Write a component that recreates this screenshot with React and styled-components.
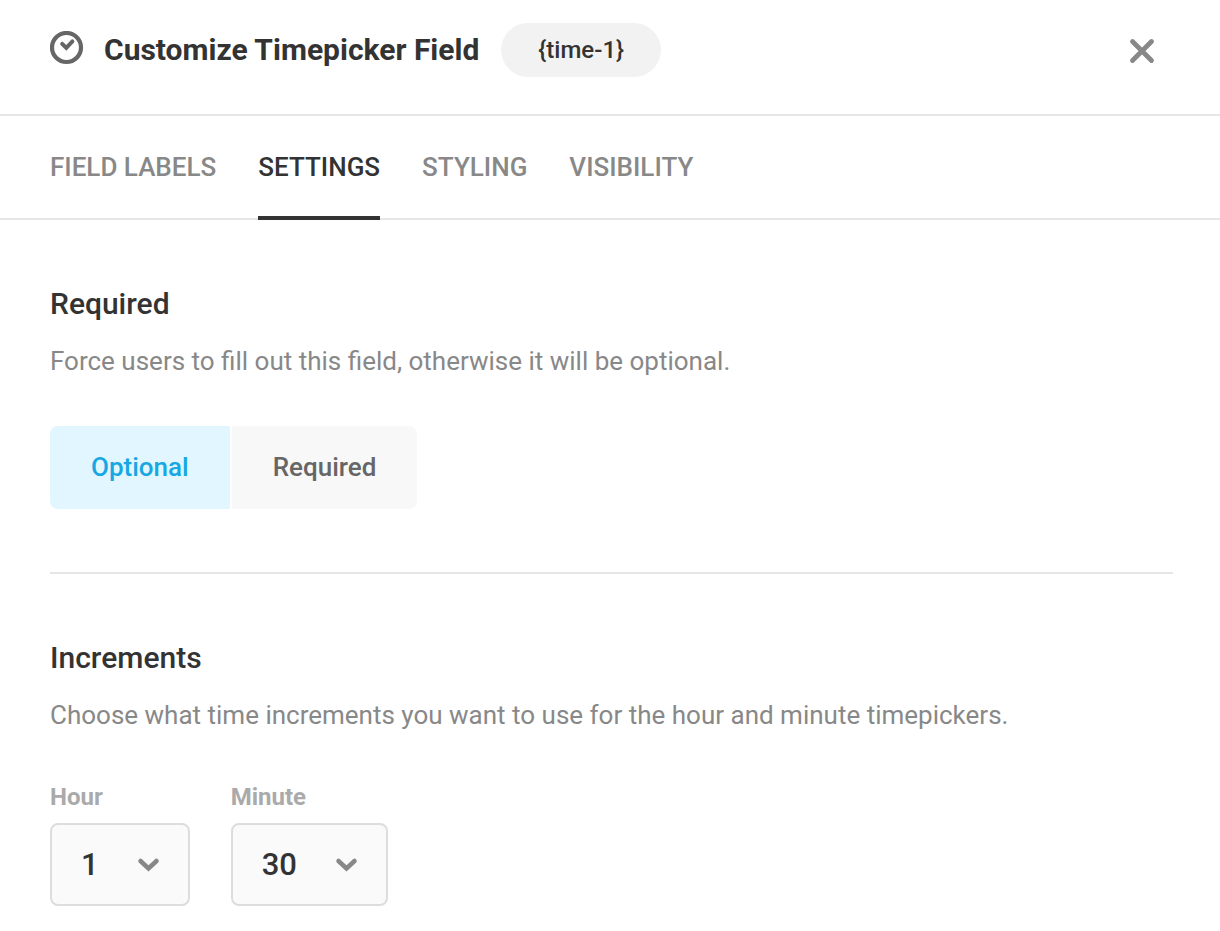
import React, { useState } from "react";
import styled, { createGlobalStyle } from "styled-components";

const GlobalStyle = createGlobalStyle`
  *, *::before, *::after { box-sizing: border-box; }
  body { margin: 0; background: #fff; color: #333; font-family: Roboto, "Liberation Sans", sans-serif; }
  button, select { font-family: inherit; }
  h1, h2, p { margin: 0; }
`;

const Header = styled.header`
  display: flex;
  align-items: center;
  padding: 23px 50px 37px;
  border-bottom: 2px solid #e6e6e6;
`;

const FieldIcon = styled.svg`
  width: 34px;
  height: 34px;
  margin-bottom: 4px;
  flex: none;
`;

const Title = styled.h1`
  margin-left: 20px;
  font-size: 30px;
  line-height: 40px;
  font-weight: 700;
`;

const Tag = styled.span`
  margin-left: 22px;
  padding: 0 37px;
  border-radius: 27px;
  background: #f2f2f2;
  font-size: 24px;
  line-height: 54px;
  font-weight: 500;
`;

const CloseButton = styled.button`
  display: flex;
  margin-left: auto;
  padding: 14px 14px 12px;
  border: 0;
  background: none;
  cursor: pointer;
`;

const Tabs = styled.nav`
  display: flex;
  gap: 42px;
  padding: 0 50px;
  border-bottom: 2px solid #e6e6e6;
`;

const Tab = styled.button`
  height: 104px;
  margin-bottom: -2px;
  padding: 2px 0 0;
  border: 0;
  border-bottom: 4px solid ${(p) => (p.$active ? "#333" : "transparent")};
  background: none;
  color: ${(p) => (p.$active ? "#333" : "#888")};
  font-size: 26px;
  line-height: 32px;
  font-weight: 500;
  cursor: pointer;
`;

const Content = styled.main`
  padding: 0 47px 0 50px;
`;

const Section = styled.section`
  padding: 64px 0 63px;
  & + & {
    border-top: 2px solid #e6e6e6;
    padding-bottom: 25px;
  }
`;

const SectionTitle = styled.h2`
  font-size: 30px;
  line-height: 40px;
  font-weight: 500;
`;

const Description = styled.p`
  margin-top: 17px;
  color: #888;
  font-size: 26px;
  line-height: 40px;
`;

const Segments = styled.div`
  display: flex;
  gap: 2px;
  margin-top: 45px;
`;

const Segment = styled.button`
  padding: 0 41px;
  border: 0;
  border-radius: ${(p) => (p.$first ? "8px 0 0 8px" : "0 8px 8px 0")};
  background: ${(p) => (p.$active ? "#e1f6ff" : "#f8f8f8")};
  color: ${(p) => (p.$active ? "#17a8e3" : "#666")};
  font-size: 26px;
  line-height: 83px;
  font-weight: 500;
  cursor: pointer;
`;

const Fields = styled.div`
  display: flex;
  gap: 41px;
  margin-top: 47px;
`;

const Field = styled.div`
  display: flex;
  flex-direction: column;
  gap: 11px;
`;

const FieldLabel = styled.label`
  color: #aaa;
  font-size: 24px;
  line-height: 30px;
  font-weight: 700;
`;

const SelectBox = styled.div`
  display: grid;
  align-items: center;
  & > * { grid-area: 1 / 1; }
`;

const Select = styled.select`
  appearance: none;
  height: 83px;
  padding: 0 89px 0 29px;
  border: 2px solid #ddd;
  border-radius: 8px;
  background: #fafafa;
  color: #333;
  font-size: 31px;
  font-weight: 500;
  field-sizing: content;
`;

const Chevron = styled.svg`
  justify-self: end;
  width: 24px;
  height: 16px;
  margin-right: 29px;
  pointer-events: none;
`;

const TABS = ["FIELD LABELS", "SETTINGS", "STYLING", "VISIBILITY"];

function SelectField({ id, label, initial, options }) {
  return (
    <Field>
      <FieldLabel htmlFor={id}>{label}</FieldLabel>
      <SelectBox>
        <Select id={id} defaultValue={initial}>
          {options.map((o) => <option key={o}>{o}</option>)}
        </Select>
        <Chevron viewBox="0 0 24 16" aria-hidden="true">
          <path d="M3.500 4L11.500 11.500L19.500 4" fill="none" stroke="#888" strokeWidth="4.500" strokeLinecap="round" />
        </Chevron>
      </SelectBox>
    </Field>
  );
}

export default function App() {
  const [tab, setTab] = useState("SETTINGS");
  const [mode, setMode] = useState("Optional");
  return (
    <>
      <GlobalStyle />
      <Header>
        <FieldIcon viewBox="0 0 34 34" fill="none" stroke="#666" aria-hidden="true">
          <circle cx="16.500" cy="16.500" r="14.500" strokeWidth="4.200" />
          <path d="M12.200 12.800L16.300 16.900L22.400 10.400" strokeWidth="4" strokeLinecap="round" strokeLinejoin="miter" />
        </FieldIcon>
        <Title>Customize Timepicker Field</Title>
        <Tag>{"{time-1}"}</Tag>
        <CloseButton aria-label="Close">
          <svg width="28" height="28" viewBox="0 0 28 28" aria-hidden="true">
            <path d="M4.500 4.500L23.500 23.500M23.500 4.500L4.500 23.500" stroke="#888" strokeWidth="4.800" strokeLinecap="round" />
          </svg>
        </CloseButton>
      </Header>
      <Tabs>
        {TABS.map((t) => <Tab key={t} $active={t === tab} onClick={() => setTab(t)}>{t}</Tab>)}
      </Tabs>
      <Content>
        <Section>
          <SectionTitle>Required</SectionTitle>
          <Description>Force users to fill out this field, otherwise it will be optional.</Description>
          <Segments>
            {["Optional", "Required"].map((m, i) => (
              <Segment key={m} $first={i === 0} $active={m === mode} onClick={() => setMode(m)}>{m}</Segment>
            ))}
          </Segments>
        </Section>
        <Section>
          <SectionTitle>Increments</SectionTitle>
          <Description>Choose what time increments you want to use for the hour and minute timepickers.</Description>
          <Fields>
            <SelectField id="hour" label="Hour" initial="1" options={["1"]} />
            <SelectField id="minute" label="Minute" initial="30" options={["30"]} />
          </Fields>
        </Section>
      </Content>
    </>
  );
}
